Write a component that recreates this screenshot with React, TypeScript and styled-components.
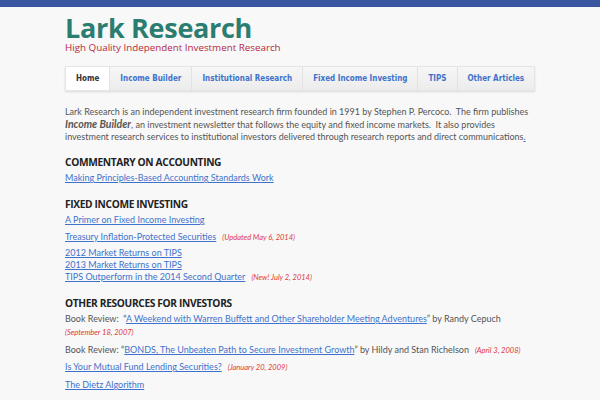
import styled, { createGlobalStyle } from 'styled-components';

const GlobalStyle = createGlobalStyle`
  html, body {
    margin: 0;
    padding: 0;
    background: #f8f8f8;
  }
  body {
    font-family: "Lato", "Liberation Sans", sans-serif;
  }
`;

const TopBar = styled.div`
  height: 7px;
  background: #3a56a0;
`;

const Page = styled.div`
  padding: 0 0 0 65px;
`;

const Header = styled.header`
  padding-top: 6px;
`;

const Title = styled.h1`
  margin: 0;
  font-family: "Open Sans", "Liberation Sans", sans-serif;
  font-weight: 700;
  font-size: 27px;
  line-height: 29px;
  color: #2b7d72;
  letter-spacing: -0.3px;
`;

const Tagline = styled.div`
  font-family: "Open Sans", "Liberation Sans", sans-serif;
  font-size: 9.8px;
  line-height: 11px;
  color: #b5293c;
`;

const Nav = styled.nav`
  display: inline-flex;
  margin-top: 13px;
  background: linear-gradient(#f6f6f6, #ececec);
  box-shadow: 0 1px 2px rgba(0, 0, 0, 0.12);
  border: 1px solid #e6e6e6;
`;

const Tab = styled.a<{ active?: boolean }>`
  display: block;
  padding: 0 10px;
  height: 23px;
  line-height: 23px;
  font-family: "DejaVu Sans Condensed", "DejaVu Sans", sans-serif;
  font-weight: 700;
  font-size: 8px;
  color: ${(p) => (p.active ? '#333' : '#3f72cc')};
  background: ${(p) => (p.active ? '#fff' : 'transparent')};
  border-right: 1px solid #e2e2e2;
  text-decoration: none;
  &:last-child {
    border-right: none;
  }
`;

const Main = styled.main`
  width: 470px;
  margin-top: 15px;
  color: #555;
  font-size: 9px;
  line-height: 12px;
`;

const Intro = styled.p`
  margin: 0;
  b {
    font-size: 10.5px;
  }
`;

const Section = styled.section`
  margin-top: 14px;
  ${Intro} + & {
    margin-top: 13px;
  }
`;

const Heading = styled.h2`
  margin: 0 0 3px;
  font-family: "Open Sans", "Liberation Sans", sans-serif;
  font-weight: 700;
  font-size: 10.2px;
  letter-spacing: -0.35px;
  line-height: 13px;
  color: #222;
`;

const Item = styled.div<{ gap?: number }>`
  margin-top: ${(p) => p.gap ?? 0}px;
`;

const Link = styled.a`
  color: #3f72cc;
  text-decoration: underline;
`;

const Note = styled.span`
  margin-left: 6px;
  font-size: 7.5px;
  line-height: 1;
  font-style: italic;
  color: #e0393e;
`;

const NoteLine = styled.div`
  font-size: 7.5px;
  line-height: 15px;
  font-style: italic;
  color: #e0393e;
`;

const tabs = [
  'Home',
  'Income Builder',
  'Institutional Research',
  'Fixed Income Investing',
  'TIPS',
  'Other Articles',
];

export default function App() {
  return (
    <>
      <GlobalStyle />
      <TopBar />
      <Page>
        <Header>
          <Title>Lark Research</Title>
          <Tagline>High Quality Independent Investment Research</Tagline>
          <Nav>
            {tabs.map((t, i) => (
              <Tab key={t} active={i === 0}>
                {t}
              </Tab>
            ))}
          </Nav>
        </Header>
        <Main>
          <Intro>
            Lark Research is an independent investment research firm founded in 1991 by Stephen P. Percoco.&nbsp; The
            firm publishes
            <br />
            <b><i>Income Builder</i></b>, an investment newsletter that follows the equity and fixed income
            markets.&nbsp; It also provides
            <br />
            investment research services to institutional investors delivered through research reports and direct
            communications<Link>.</Link>
          </Intro>

          <Section>
            <Heading>COMMENTARY ON ACCOUNTING</Heading>
            <Item>
              <Link>Making Principles-Based Accounting Standards Work</Link>
            </Item>
          </Section>

          <Section>
            <Heading>FIXED INCOME INVESTING</Heading>
            <Item>
              <Link>A Primer on Fixed Income Investing</Link>
            </Item>
            <Item gap={5}>
              <Link>Treasury Inflation-Protected Securities</Link>
              <Note>(Updated May 6, 2014)</Note>
            </Item>
            <Item gap={4}>
              <Link>2012 Market Returns on TIPS</Link>
            </Item>
            <Item>
              <Link>2013 Market Returns on TIPS</Link>
            </Item>
            <Item>
              <Link>TIPS Outperform in the 2014 Second Quarter</Link>
              <Note>(New! July 2, 2014)</Note>
            </Item>
          </Section>

          <Section>
            <Heading>OTHER RESOURCES FOR INVESTORS</Heading>
            <Item gap={3}>
              Book Review:&nbsp; “<Link>A Weekend with Warren Buffett and Other Shareholder Meeting Adventures</Link>” by
              Randy Cepuch
            </Item>
            <NoteLine>(September 18, 2007)</NoteLine>
            <Item gap={4}>
              Book Review: “<Link>BONDS, The Unbeaten Path to Secure Investment Growth</Link>” by Hildy and Stan
              Richelson
              <Note>(April 3, 2008)</Note>
            </Item>
            <Item gap={5}>
              <Link>Is Your Mutual Fund Lending Securities?</Link>
              <Note>(January 20, 2009)</Note>
            </Item>
            <Item gap={6}>
              <Link>The Dietz Algorithm</Link>
            </Item>
          </Section>
        </Main>
      </Page>
    </>
  );
}
